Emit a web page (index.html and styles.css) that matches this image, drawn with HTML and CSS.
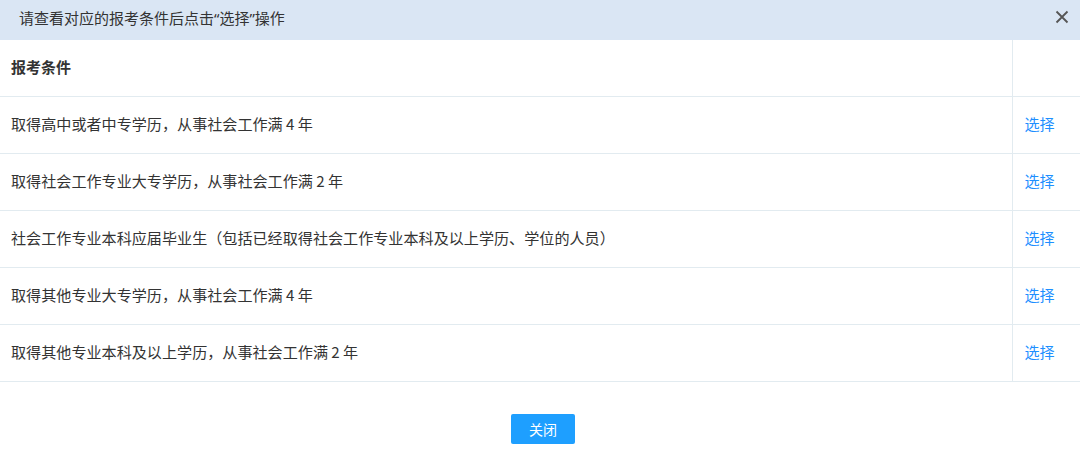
FILE: index.html
```html
<!DOCTYPE html>
<html lang="zh-CN">
<head>
<meta charset="utf-8">
<link rel="stylesheet" href="styles.css">
</head>
<body>
<div class="dialog">
  <div class="title-bar">
    <span class="title">请查看对应的报考条件后点击<span class="q">“</span>选择<span class="q">”</span>操作</span>
    <span class="close">
      <svg width="14" height="14" viewBox="0 0 14 14"><path d="M1.5 1.5 L12.5 12.5 M12.5 1.5 L1.5 12.5" stroke="#555" stroke-width="1.8" fill="none"/></svg>
    </span>
  </div>
  <table class="grid">
    <tr class="head"><th>报考条件</th><th class="op"></th></tr>
    <tr><td>取得高中或者中专学历，从事社会工作满 4 年</td><td class="op"><a>选择</a></td></tr>
    <tr><td>取得社会工作专业大专学历，从事社会工作满 2 年</td><td class="op"><a>选择</a></td></tr>
    <tr><td>社会工作专业本科应届毕业生（包括已经取得社会工作专业本科及以上学历、学位的人员）</td><td class="op"><a>选择</a></td></tr>
    <tr><td>取得其他专业大专学历，从事社会工作满 4 年</td><td class="op"><a>选择</a></td></tr>
    <tr><td>取得其他专业本科及以上学历，从事社会工作满 2 年</td><td class="op"><a>选择</a></td></tr>
  </table>
  <div class="footer"><button class="btn">关闭</button></div>
</div>
</body>
</html>
```
FILE: styles.css
```css
html, body { margin: 0; padding: 0; background: #fff; }
body { font-family: "Noto Sans CJK SC", "Noto Sans", sans-serif; color: #333; width: 1080px; height: 456px; overflow: hidden; }
.dialog { width: 1080px; }
.title-bar { height: 40px; background: #dae6f4; display: flex; align-items: center; justify-content: space-between; padding: 0 10px 0 19px; box-sizing: border-box; }
.title { font-size: 15px; color: #333; line-height: 40px; margin-top: -4px; }
.q { font-family: "Noto Sans", sans-serif; }
.close { display: flex; width: 16px; height: 16px; align-items: center; justify-content: center; margin-top: -6px; }
.grid { width: 1080px; border-collapse: collapse; table-layout: fixed; }
.grid th, .grid td { height: 57px; padding: 0 11px 3px; font-size: 15.1px; text-align: left; border-bottom: 1px solid #e2ebf0; box-sizing: border-box; }
.grid .head th { height: 56px; font-weight: bold; color: #333; font-size: 15px; padding-bottom: 2px; }
.grid .op { width: 68px; border-left: 1px solid #e2ebf0; padding-left: 12px; }
.grid a { color: #1e8fff; cursor: pointer; }
.footer { display: flex; justify-content: center; padding-top: 32px; }
.btn { width: 64px; height: 30px; border: none; border-radius: 2px; background: #1e9fff; color: #fff; font-family: "Noto Sans CJK SC", sans-serif; font-size: 14px; padding: 0; margin-left: 6px; }
```
